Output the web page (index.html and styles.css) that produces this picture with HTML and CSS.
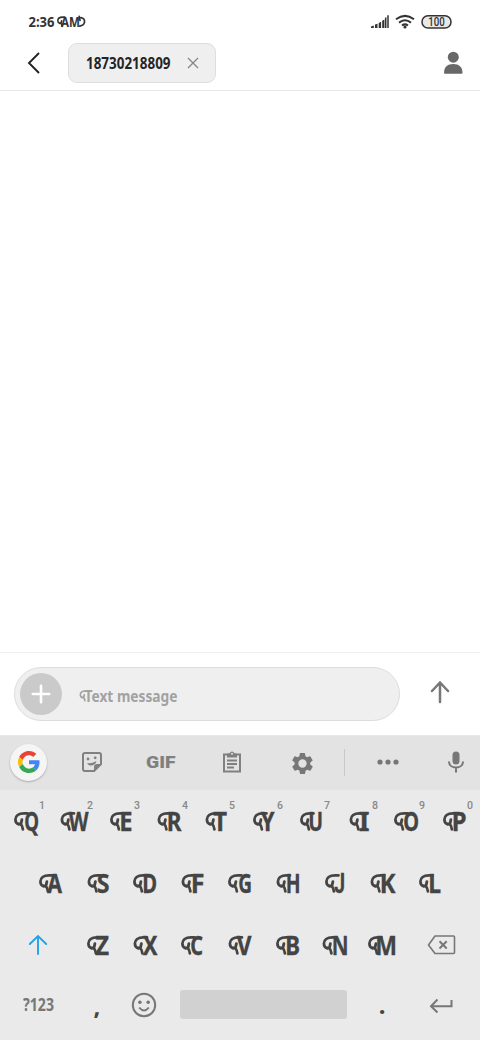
FILE: index.html
```html
<!DOCTYPE html>
<html lang="en">
<head>
<meta charset="utf-8">
<title>New message</title>
<link rel="stylesheet" href="styles.css">
</head>
<body>
<svg width="0" height="0" class="defs">
  <defs>
    <g id="swash" fill="none" stroke="currentColor" stroke-linecap="round" stroke-linejoin="round">
      <path d="M13.500 1.400H10C4.500 1.400 1.400 4 1.400 7.600c0 2.600 1.200 4.200 3.400 4.800" stroke-width="2.700"/>
      <path d="M7.900 7.600L7 11.800H4.800M6.600 12.200c1.400 1 2.100 2.600 2.300 5.200" stroke-width="2.800"/>
    </g>
  </defs>
</svg>
<main class="screen">
  <header class="status">
    <svg class="clock" width="70" height="24" viewBox="0 0 70 24">
      <text x="4.5" y="17" textLength="26" lengthAdjust="spacingAndGlyphs">2:36</text>
      <use href="#swash" transform="translate(33 6.300) scale(.58)"/>
      <text x="37" y="17" textLength="19" lengthAdjust="spacingAndGlyphs">AM</text>
      <path d="M55.200 6.300l.8 4M57 7.600c2.700.4 3.900 2.200 3.500 4.600-.4 2.300-2.100 3.600-4.800 3.900" fill="none" stroke="currentColor" stroke-width="1.700" stroke-linecap="round"/>
    </svg>
    <svg class="signals" width="84" height="20" viewBox="370 12 84 20">
      <path d="M371 28v-1.500l2.800-.9V28zM375 28v-3.400l2.500-.9V28zM378.700 28v-5l2.400-1.200V28zM382.200 28v-7.300l2.200-1.200V28z" fill="#333"/>
      <path d="M388 15.200V28M385.700 17.500V28" stroke="#333" stroke-width="1.500"/>
      <g fill="none" stroke="#333" stroke-width="2"><path d="M396 19.300q9-6.800 18 0M399 22.600q6-4.600 12 0M402 25.500q3-2.300 6 0"/></g>
      <circle cx="405" cy="27" r="1.600" fill="#333"/>
      <rect x="422" y="15.800" width="29" height="12.200" rx="6" fill="#e8e8e8" stroke="#333" stroke-width="1.500"/>
      <text class="charge" x="428.300" y="26" textLength="16.500" lengthAdjust="spacingAndGlyphs">100</text>
    </svg>
  </header>
  <nav class="topbar">
    <svg class="back" width="14" height="24" viewBox="0 0 14 24"><path d="M12 2L2 12l10 10" fill="none" stroke="#222" stroke-width="1.900"/></svg>
    <div class="chip">
      <svg class="number" width="85" height="24"><text x="0" y="18" textLength="84.500" lengthAdjust="spacingAndGlyphs">18730218809</text></svg>
      <svg width="12" height="12" viewBox="0 0 12 12"><path d="M1 1l10 10M11 1L1 11" stroke="#858585" stroke-width="1.300"/></svg>
    </div>
    <svg class="person" width="20" height="24" viewBox="0 0 20 24"><circle cx="10.300" cy="6.200" r="5.500" fill="#686868"/><path d="M1 22c0-6 3.500-9 9.200-9s9.300 3 9.300 9q0 .8-1 .8H2q-1 0-1-.8z" fill="#686868"/></svg>
  </nav>
  <section class="thread"></section>
  <section class="composer">
    <div class="field">
      <span class="add"><svg width="20" height="20" viewBox="0 0 20 20"><path d="M10 1.800v16.400M1.800 10h16.400" stroke="#fff" stroke-width="2.600" stroke-linecap="round"/></svg></span>
      <svg class="hint" width="104" height="26" viewBox="0 0 104 26">
        <use href="#swash" transform="translate(1.500 7.200) scale(.6)"/>
        <text x="6.500" y="19" textLength="93" lengthAdjust="spacingAndGlyphs">Text message</text>
      </svg>
    </div>
    <svg class="send" width="20" height="24" viewBox="0 0 20 24"><path d="M10 22V3M2 11l8-8.500 8 8.500" fill="none" stroke="#777" stroke-width="2.500" stroke-linecap="round"/></svg>
  </section>
  <section class="keyboard">
    <div class="tools">
      <span class="google"><svg width="22" height="22" viewBox="0 0 48 48">
        <path fill="#EA4335" d="M24 9.500c3.540 0 6.710 1.220 9.210 3.600l6.850-6.850C35.900 2.380 30.470 0 24 0 14.620 0 6.510 5.380 2.560 13.220l7.980 6.190C12.430 13.720 17.740 9.500 24 9.500z"/>
        <path fill="#4285F4" d="M46.980 24.550c0-1.570-.15-3.090-.38-4.550H24v9.020h12.940c-.58 2.960-2.260 5.480-4.780 7.180l7.730 6c4.510-4.180 7.090-10.360 7.090-17.650z"/>
        <path fill="#FBBC05" d="M10.530 28.590a14.500 14.500 0 0 1 0-9.180l-7.980-6.190a24 24 0 0 0 0 21.560l7.980-6.190z"/>
        <path fill="#34A853" d="M24 48c6.480 0 11.930-2.130 15.890-5.810l-7.730-6c-2.150 1.450-4.920 2.300-8.160 2.300-6.260 0-11.570-4.220-13.470-9.910l-7.980 6.190C6.510 42.620 14.620 48 24 48z"/>
      </svg></span>
      <svg class="sticker" width="22" height="22" viewBox="0 0 22 22"><path d="M4 2h14q2 0 2 2v9l-7 7H4q-2 0-2-2V4q0-2 2-2z" fill="none" stroke="#808080" stroke-width="2"/><path d="M21 13l-8 8v-5q0-3 3-3z" fill="#808080"/><circle cx="7" cy="8" r="1.400" fill="#808080"/><circle cx="14.200" cy="6.800" r="1.400" fill="#808080"/><path d="M6 12.200q5 .8 9.400-2.300c-.5 4.600-6.800 6.600-9.400 2.300z" fill="#808080"/></svg>
      <svg class="gif" width="30" height="18" viewBox="0 0 30 18"><text x="0" y="15" textLength="29.500" lengthAdjust="spacingAndGlyphs">GIF</text></svg>
      <svg class="clip" width="20" height="24" viewBox="0 0 20 24"><path d="M2 4.500h16v17H2z" fill="none" stroke="#808080" stroke-width="2"/><path d="M5 7.500v-4h2.500a2.600 2.600 0 0 1 5 0H15v4z" fill="#808080"/><circle cx="10" cy="3.700" r="1" fill="#e3e3e3"/><path d="M5 10.500h10M5 14h10M5 17.500h7" stroke="#808080" stroke-width="1.800"/></svg>
      <svg class="gear" width="25" height="25" viewBox="0 0 24 24"><path fill="#777" d="M19.400 13c0-.3.1-.6.1-1s0-.7-.1-1l2.100-1.700c.2-.2.3-.4.1-.6l-2-3.500c-.1-.2-.4-.3-.6-.2l-2.500 1c-.5-.4-1.100-.7-1.700-1l-.4-2.600c0-.2-.2-.4-.5-.4h-4c-.3 0-.5.2-.5.4L9 5.100c-.6.2-1.200.6-1.700 1L4.900 5c-.2-.1-.5 0-.6.200l-2 3.500c-.1.200-.1.500.1.600L4.500 11c0 .3-.1.700-.1 1s0 .7.1 1l-2.100 1.700c-.2.100-.2.400-.1.600l2 3.500c.1.200.4.300.6.200l2.500-1c.5.400 1.100.7 1.700 1l.4 2.600c0 .2.200.4.500.4h4c.2 0 .5-.2.500-.4l.4-2.600c.6-.3 1.200-.6 1.700-1l2.500 1c.2.100.5 0 .6-.2l2-3.500c.1-.2.1-.5-.1-.6zM12 16a4 4 0 1 1 0-8 4 4 0 0 1 0 8z"/></svg>
      <i class="divider"></i>
      <svg class="more" width="22" height="6" viewBox="0 0 22 6"><g fill="#777"><circle cx="3" cy="3" r="2.600"/><circle cx="11" cy="3" r="2.600"/><circle cx="19" cy="3" r="2.600"/></g></svg>
      <svg class="mic" width="18" height="24" viewBox="0 0 18 24"><rect x="5.500" y="1.500" width="7" height="13" rx="3.500" fill="#777"/><path d="M2 11.500c0 8 14 8 14 0M9 17.500v5" fill="none" stroke="#777" stroke-width="2"/></svg>
    </div>
    <div class="row" id="row1"></div>
    <div class="row inset" id="row2"></div>
    <div class="row third">
      <svg class="shift" width="20" height="22" viewBox="0 0 20 22"><path d="M10 20V2.500M1.800 10L10 2l8.200 8" fill="none" stroke="#23a2e8" stroke-width="1.900" stroke-linecap="round"/></svg>
      <div class="letters" id="row3"></div>
      <svg class="delete" width="29" height="22" viewBox="0 0 29 22"><path d="M8 2h18.500q1 0 1 1v15.500q0 1-1 1H8L1.500 11z" fill="none" stroke="#777" stroke-width="1.600" stroke-linejoin="round"/><path d="M12.500 7.300l7.200 7.200M19.700 7.300l-7.200 7.200" stroke="#777" stroke-width="2"/></svg>
    </div>
    <div class="row bottom">
      <svg class="symbols" width="32" height="24"><text x="0" y="18" textLength="31" lengthAdjust="spacingAndGlyphs">?123</text></svg>
      <span class="comma">,</span>
      <svg class="smile" width="26" height="26" viewBox="0 0 26 26"><circle cx="13" cy="13" r="11.200" fill="none" stroke="#777" stroke-width="2"/><circle cx="8.900" cy="10.300" r="1.800" fill="#777"/><circle cx="17.200" cy="10.300" r="1.800" fill="#777"/><path d="M8.200 15.500q4.800 6 9.600 0" fill="none" stroke="#777" stroke-width="2"/></svg>
      <i class="space"></i>
      <span class="period">.</span>
      <svg class="enter" width="26" height="18" viewBox="0 0 26 18"><path d="M9.500 2.500L3 9.200l6.500 6.300M3 9.200h20.500V3" fill="none" stroke="#777" stroke-width="2"/></svg>
    </div>
  </section>
</main>
<script src="keys.js"></script>
</body>
</html>
```
FILE: styles.css
```css
* { box-sizing: border-box; }
body { margin: 0; background: #fff; font-family: "Noto Sans", "Open Sans", sans-serif; color: #333; }
svg { display: block; flex: none; overflow: visible; }
text { font-weight: 700; fill: currentColor; }
.defs { position: absolute; }
.screen { width: 480px; height: 1040px; display: flex; flex-direction: column; overflow: hidden; }
.status { height: 40px; display: flex; justify-content: space-between; padding: 10px 26px 0 24px; }
.clock text { font-size: 15px; }
.signals { margin-top: 2px; }
.signals .charge { font-size: 12px; fill: #333; font-family: Roboto, sans-serif; font-weight: 500; }
.topbar { height: 51px; display: flex; align-items: center; border-bottom: 1px solid #e8e8e8; padding: 0 17px 4px 27px; }
.chip { width: 148px; height: 40px; margin-left: 27px; border: 1px solid #dedede; border-radius: 9px; background: #efefef; display: flex; align-items: center; padding-left: 17px; gap: 16px; }
.number { color: #252525; }
.number text { font-size: 16.5px; }
.person { margin-left: auto; }
.thread { height: 562px; border-bottom: 1px solid #eee; }
.composer { height: 82px; display: flex; align-items: center; padding: 0 30px 0 14px; justify-content: space-between; }
.field { width: 386px; height: 54px; border: 1px solid #ddd; border-radius: 27px; background: #efefef; display: flex; align-items: center; padding-left: 5px; gap: 16px; }
.add { width: 42px; height: 42px; border-radius: 50%; background: #cacaca; display: flex; align-items: center; justify-content: center; }
.hint { color: #a2a2a2; margin-top: 4px; }
.hint text { font-size: 16px; }
.send { margin-top: -5px; }
.keyboard { height: 305px; background: #eaeaea; }
.tools { height: 55px; background: #e3e3e3; display: flex; align-items: center; padding: 0 0 2px 10px; border-top: 1px solid #e9e9e9; }
.google { width: 37px; height: 37px; border-radius: 50%; background: #f5f5f5; box-shadow: 0 1px 2px #aaa; display: flex; align-items: center; justify-content: center; }
.sticker { margin-left: 34px; }
.gif { margin-left: 43px; color: #808080; }
.gif text { font-family: Roboto, sans-serif; font-size: 16.5px; font-weight: 900; }
.clip { margin-left: 46px; }
.gear { margin-left: 47.5px; margin-top: 2px; }
.divider { width: 1px; height: 27px; margin-left: 29.5px; background: #c8c8c8; }
.more { margin-left: 32px; }
.mic { margin-left: 48px; }
.row { height: 62px; display: flex; align-items: center; padding-left: 2px; }
.inset { padding-left: 26px; }
.key { width: 47.5px; height: 62px; color: #444; }
.key text { font-size: 27px; stroke: currentColor; stroke-width: .3px; }
.key .upright { font-family: Roboto, sans-serif; }
.key .num { font-family: Roboto, sans-serif; font-size: 11.5px; fill: #888; font-weight: 500; stroke: none; }
.third { padding-left: 28px; }
.letters { display: flex; margin-left: 25px; }
.delete { margin-left: 21.5px; }
.bottom { height: 64px; padding: 0 0 8px 23px; }
.symbols { color: #777; margin-top: 2px; }
.symbols text { font-size: 17.5px; }
.comma, .period { font-size: 24px; line-height: 30px; font-weight: 700; color: #444; width: 8px; text-align: center; }
.comma { margin-left: 38px; margin-top: 3px; }
.smile { margin-left: 30px; margin-top: 2px; }
.space { width: 167px; height: 29px; margin-left: 23px; border-radius: 3px; background: #d1d1d1; }
.period { margin-left: 31px; margin-top: 2px; }
.enter { margin-left: 42px; margin-top: 3px; }
```
FILE: keys.js
```js
// Each key: letter, left edge of its flourish, left and right edges of the letter.
const rows = [
  { id: "row1", start: 2, keys: [["Q",14,25,38],["W",60,69,87],["E",110,121,131.5],["R",157,168,180],["T",205.5,214,226],["Y",252.5,261,273],["U",300,310,322],["I",349,359,368],["O",394,404,418],["P",442.5,453,465]] },
  { id: "row2", start: 26, keys: [["A",39,48,61],["S",87,97,108],["D",133,144,156],["F",181,192,203],["G",228,239,251],["H",276,287,299],["J",325,335,344],["K",370,381,394],["L",419,430,440]] },
  { id: "row3", start: 73, keys: [["Z",87,96,108],["X",133,143,156],["C",181,191,202],["V",228,237,250],["B",276,287,299],["N",322,333,347],["M",368,377,396]] }
];
const stems = "BDEFHKLMNPRU";
for (const row of rows) {
  document.getElementById(row.id).innerHTML = row.keys.map(([c, s, l, r], i) => {
    const o = row.start + i * 47.5;
    const pad = stems.includes(c) ? 1.8 : 0.8;
    const num = row.id === "row1" ? `<text class="num" x="37" y="19" textLength="6" lengthAdjust="spacingAndGlyphs">${(i + 1) % 10}</text>` : "";
    const face = c === "J" ? ' class="upright"' : "";
    return `<svg class="key" width="47.5" height="62" viewBox="0 0 47.5 62"><use href="#swash" x="${s - o}" y="22"/><text${face} x="${l - o - pad}" y="41" textLength="${r - l + pad + 1}" lengthAdjust="spacingAndGlyphs">${c}</text>${num}</svg>`;
  }).join("");
}
```
